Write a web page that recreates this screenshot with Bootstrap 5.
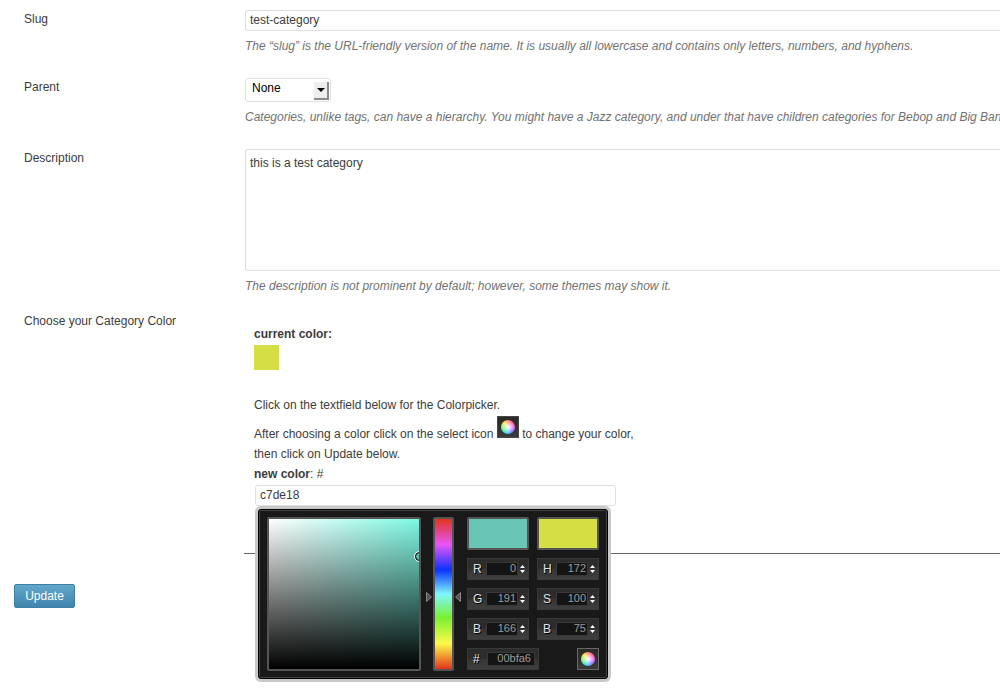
<!DOCTYPE html>
<html lang="en">
<head>
<meta charset="utf-8">
<meta name="viewport" content="width=device-width, initial-scale=1">
<title>Edit Category</title>
<link href="https://cdn.jsdelivr.net/npm/bootstrap@5.3.0/dist/css/bootstrap.min.css" rel="stylesheet">
<style>
  body { font: 12px/20px "Liberation Sans", Arial, sans-serif; color: #3c3c3c; background: #fff; }
  .edit-form { padding: 10px 0 0 24px; }
  .field-row { display: grid; grid-template-columns: 220px minmax(0, 1fr); margin-bottom: 22px; }
  .field-row.before-color { margin-bottom: 16px; }
  .field-row > label, .field-title { line-height: 18px; }
  .control-box { padding-left: 1px; }
  .wp-field { display: block; width: 100%; border: 1px solid #dfdfdf; border-radius: 3px; padding: 0 4px 2px; height: 21px; font-size: 12px; line-height: 16px; color: #3c3c3c; background: #fff; }
  .wp-field.bleed { border-right: 0; border-radius: 3px 0 0 3px; }
  textarea.wp-field { height: 122px; padding: 4px; line-height: 18px; resize: none; }
  .help { margin: 5px 0 0; font-style: italic; color: #727272; white-space: nowrap; overflow: hidden; }
  .pick-parent { width: 86px; }
  .pick-parent select { appearance: none; display: block; width: 100%; height: 24px; border: 1px solid #dfdfdf; border-radius: 3px; background: #fff; color: #000; font-size: 12px; line-height: 16px; padding: 0 6px 4px; }
  .drop-mark { position: absolute; right: 2px; top: 4px; width: 15px; height: 18px; background: #eee; border: solid #8a8a8a; border-width: 0 2px 2px 0; pointer-events: none; }
  .color-cell { padding: 12px 0 47px 10px; border-bottom: 1px solid #666; }
  .current-chip { width: 25px; height: 25px; background: #d5de43; margin: 1px 0 25px; }
  .pick-note { margin: 0 0 1px; }
  .new-color { width: 361px; margin: 1px 0 0 1px; }
  .wheel-box { display: inline-block; width: 22px; height: 22px; padding: 3px; border: 1px solid #484848; background: linear-gradient(#292929, #3b3b3b); vertical-align: baseline; }
  .wheel-box span { display: block; width: 14px; height: 14px; border-radius: 50%; background: radial-gradient(circle closest-side, #fff 10%, rgba(255,255,255,0)), conic-gradient(#f76 0deg, #f49 45deg, #e5e 90deg, #76f 140deg, #3cf 190deg, #4e8 235deg, #9f4 280deg, #fd3 320deg, #f76 360deg); }

  .color-picker { position: absolute; z-index: 5; top: 100%; left: 3px; margin-top: 3px; width: 350px; height: 170px; padding: 7px 8px; background: #191919; border: 1px solid #000; border-radius: 3px; box-shadow: inset 0 0 0 1px #444, 0 0 0 3px #c8c8c8; font-size: 11px; line-height: 14px; }
  .framed { border: 2px solid #555; border-radius: 2px; }
  .shade { width: 154px; height: 154px; overflow: hidden; position: relative; background: linear-gradient(to top, #000, rgba(0,0,0,0)), linear-gradient(to right, #fff, rgba(255,255,255,0)), #7df8e2; background-clip: padding-box; background-origin: padding-box; }
  .shade svg { position: absolute; right: -6px; top: 32px; }
  .hue { width: 21px; height: 154px; background: linear-gradient(#e1341e, #e755f8 17%, #0b32ff 34%, #7ff8fd 50%, #7aef31 66%, #fdfb48 83%, #e1341e); background-clip: padding-box; background-origin: padding-box; }
  .hue-track { display: flex; align-items: center; margin: 0 5px; gap: 1px; }
  .hue-track svg { position: relative; top: 3px; }
  .cp-values { width: 132px; display: grid; grid-template-columns: 62px 62px; grid-template-rows: 33px; grid-auto-rows: 22px; gap: 8px; }
  .cp-swatch { border: 2px solid #555; border-radius: 2px; }
  .cp-new { background: #69c5b5; }
  .cp-old { background: #d5de43; }
  .cp-field { display: flex; align-items: center; padding: 0 3px 0 5px; border: 1px solid #393939; background: linear-gradient(#2c2c2c 0 45%, #343434 50%, #3f3f3f); }
  .cp-field label { width: 14px; color: #e0e0e0; font-size: 12px; text-shadow: 1px 1px #000; }
  .cp-field input { width: 32px; height: 14px; padding: 0 1px 3px; border: 1px solid #383838; border-radius: 0; background: #151515; color: #9c9c9c; text-align: right; font-size: 11px; line-height: 9px; }
  .cp-field svg { margin-left: 2px; flex: none; }
  .cp-hex { width: 72px; grid-column: 1 / 2; }
  .cp-hex input { width: 48px; padding-right: 3px; }
  .cp-submit { justify-self: end; border-color: #686868; }
  .btn-update { margin: 30px 0 80px 14px; width: 61px; height: 24px; padding: 0; font-size: 12px; line-height: 20px; color: #fff; border: 1px solid #3f7fa4; border-radius: 2px; background: linear-gradient(#62a7cb, #3f84ad); }
  .btn-update:hover { color: #fff; background: #3f84ad; }
</style>
</head>
<body>
<form>
  <div class="edit-form">
    <div class="field-row">
      <label for="slug">Slug</label>
      <div class="control-box">
        <input class="wp-field bleed" id="slug" type="text" value="test-category">
        <p class="help">The “slug” is the URL-friendly version of the name. It is usually all lowercase and contains only letters, numbers, and hyphens.</p>
      </div>
    </div>
    <div class="field-row">
      <label for="parent">Parent</label>
      <div class="control-box">
        <div class="pick-parent position-relative">
          <select id="parent"><option>None</option></select>
          <span class="drop-mark"><svg class="d-block" width="13" height="16" viewBox="0 0 13 16"><path d="M3 6h8l-4 4z" fill="#000"/></svg></span>
        </div>
        <p class="help">Categories, unlike tags, can have a hierarchy. You might have a Jazz category, and under that have children categories for Bebop and Big Ban</p>
      </div>
    </div>
    <div class="field-row before-color">
      <label for="description">Description</label>
      <div class="control-box">
        <textarea class="wp-field bleed" id="description">this is a test category</textarea>
        <p class="help">The description is not prominent by default; however, some themes may show it.</p>
      </div>
    </div>
    <div class="field-row mb-0">
      <div class="field-title">Choose your Category Color</div>
      <div class="color-cell">
        <strong class="d-block">current color:</strong>
        <div class="current-chip"></div>
        <p class="pick-note">Click on the textfield below for the Colorpicker.</p>
        <p class="mb-0">After choosing a color click on the select icon <span class="wheel-box"><span></span></span> to change your color,<br>then click on Update below.</p>
        <label class="d-block" for="newcolor"><strong>new color</strong>: #</label>
        <div class="new-color position-relative">
          <input class="wp-field" id="newcolor" type="text" value="c7de18">
          <div class="color-picker d-flex">
            <div class="shade framed">
              <svg width="11" height="11" viewBox="0 0 11 11" fill="none"><circle cx="5.500" cy="5.500" r="5" stroke="#fff"/><circle cx="5.500" cy="5.500" r="4" stroke="#000"/></svg>
            </div>
            <div class="hue-track">
              <svg width="6" height="10" viewBox="0 0 6 10"><path d="M.5.5v9l5-4.500z" fill="#555" stroke="#888"/></svg>
              <div class="hue framed"></div>
              <svg width="6" height="10" viewBox="0 0 6 10"><path d="M5.500.5v9l-5-4.500z" fill="#555" stroke="#888"/></svg>
            </div>
            <div class="cp-values ms-auto">
              <div class="cp-swatch cp-new"></div>
              <div class="cp-swatch cp-old"></div>
              <div class="cp-field"><label for="cr">R</label><input id="cr" type="text" value="0"><svg width="5" height="8" viewBox="0 0 5 8"><path d="M2.500 0 5 3H0zM0 5h5L2.500 8z" fill="#fff"/></svg></div>
              <div class="cp-field"><label for="ch">H</label><input id="ch" type="text" value="172"><svg width="5" height="8" viewBox="0 0 5 8"><path d="M2.500 0 5 3H0zM0 5h5L2.500 8z" fill="#fff"/></svg></div>
              <div class="cp-field"><label for="cg">G</label><input id="cg" type="text" value="191"><svg width="5" height="8" viewBox="0 0 5 8"><path d="M2.500 0 5 3H0zM0 5h5L2.500 8z" fill="#fff"/></svg></div>
              <div class="cp-field"><label for="cs">S</label><input id="cs" type="text" value="100"><svg width="5" height="8" viewBox="0 0 5 8"><path d="M2.500 0 5 3H0zM0 5h5L2.500 8z" fill="#fff"/></svg></div>
              <div class="cp-field"><label for="cb">B</label><input id="cb" type="text" value="166"><svg width="5" height="8" viewBox="0 0 5 8"><path d="M2.500 0 5 3H0zM0 5h5L2.500 8z" fill="#fff"/></svg></div>
              <div class="cp-field"><label for="cv">B</label><input id="cv" type="text" value="75"><svg width="5" height="8" viewBox="0 0 5 8"><path d="M2.500 0 5 3H0zM0 5h5L2.500 8z" fill="#fff"/></svg></div>
              <div class="cp-field cp-hex"><label for="cx">#</label><input id="cx" type="text" value="00bfa6"></div>
              <button type="button" class="wheel-box cp-submit" aria-label="Select color"><span></span></button>
            </div>
          </div>
        </div>
      </div>
    </div>
  </div>
  <button type="submit" class="btn btn-update">Update</button>
</form>
<script src="https://cdn.jsdelivr.net/npm/bootstrap@5.3.0/dist/js/bootstrap.bundle.min.js"></script>
</body>
</html>
